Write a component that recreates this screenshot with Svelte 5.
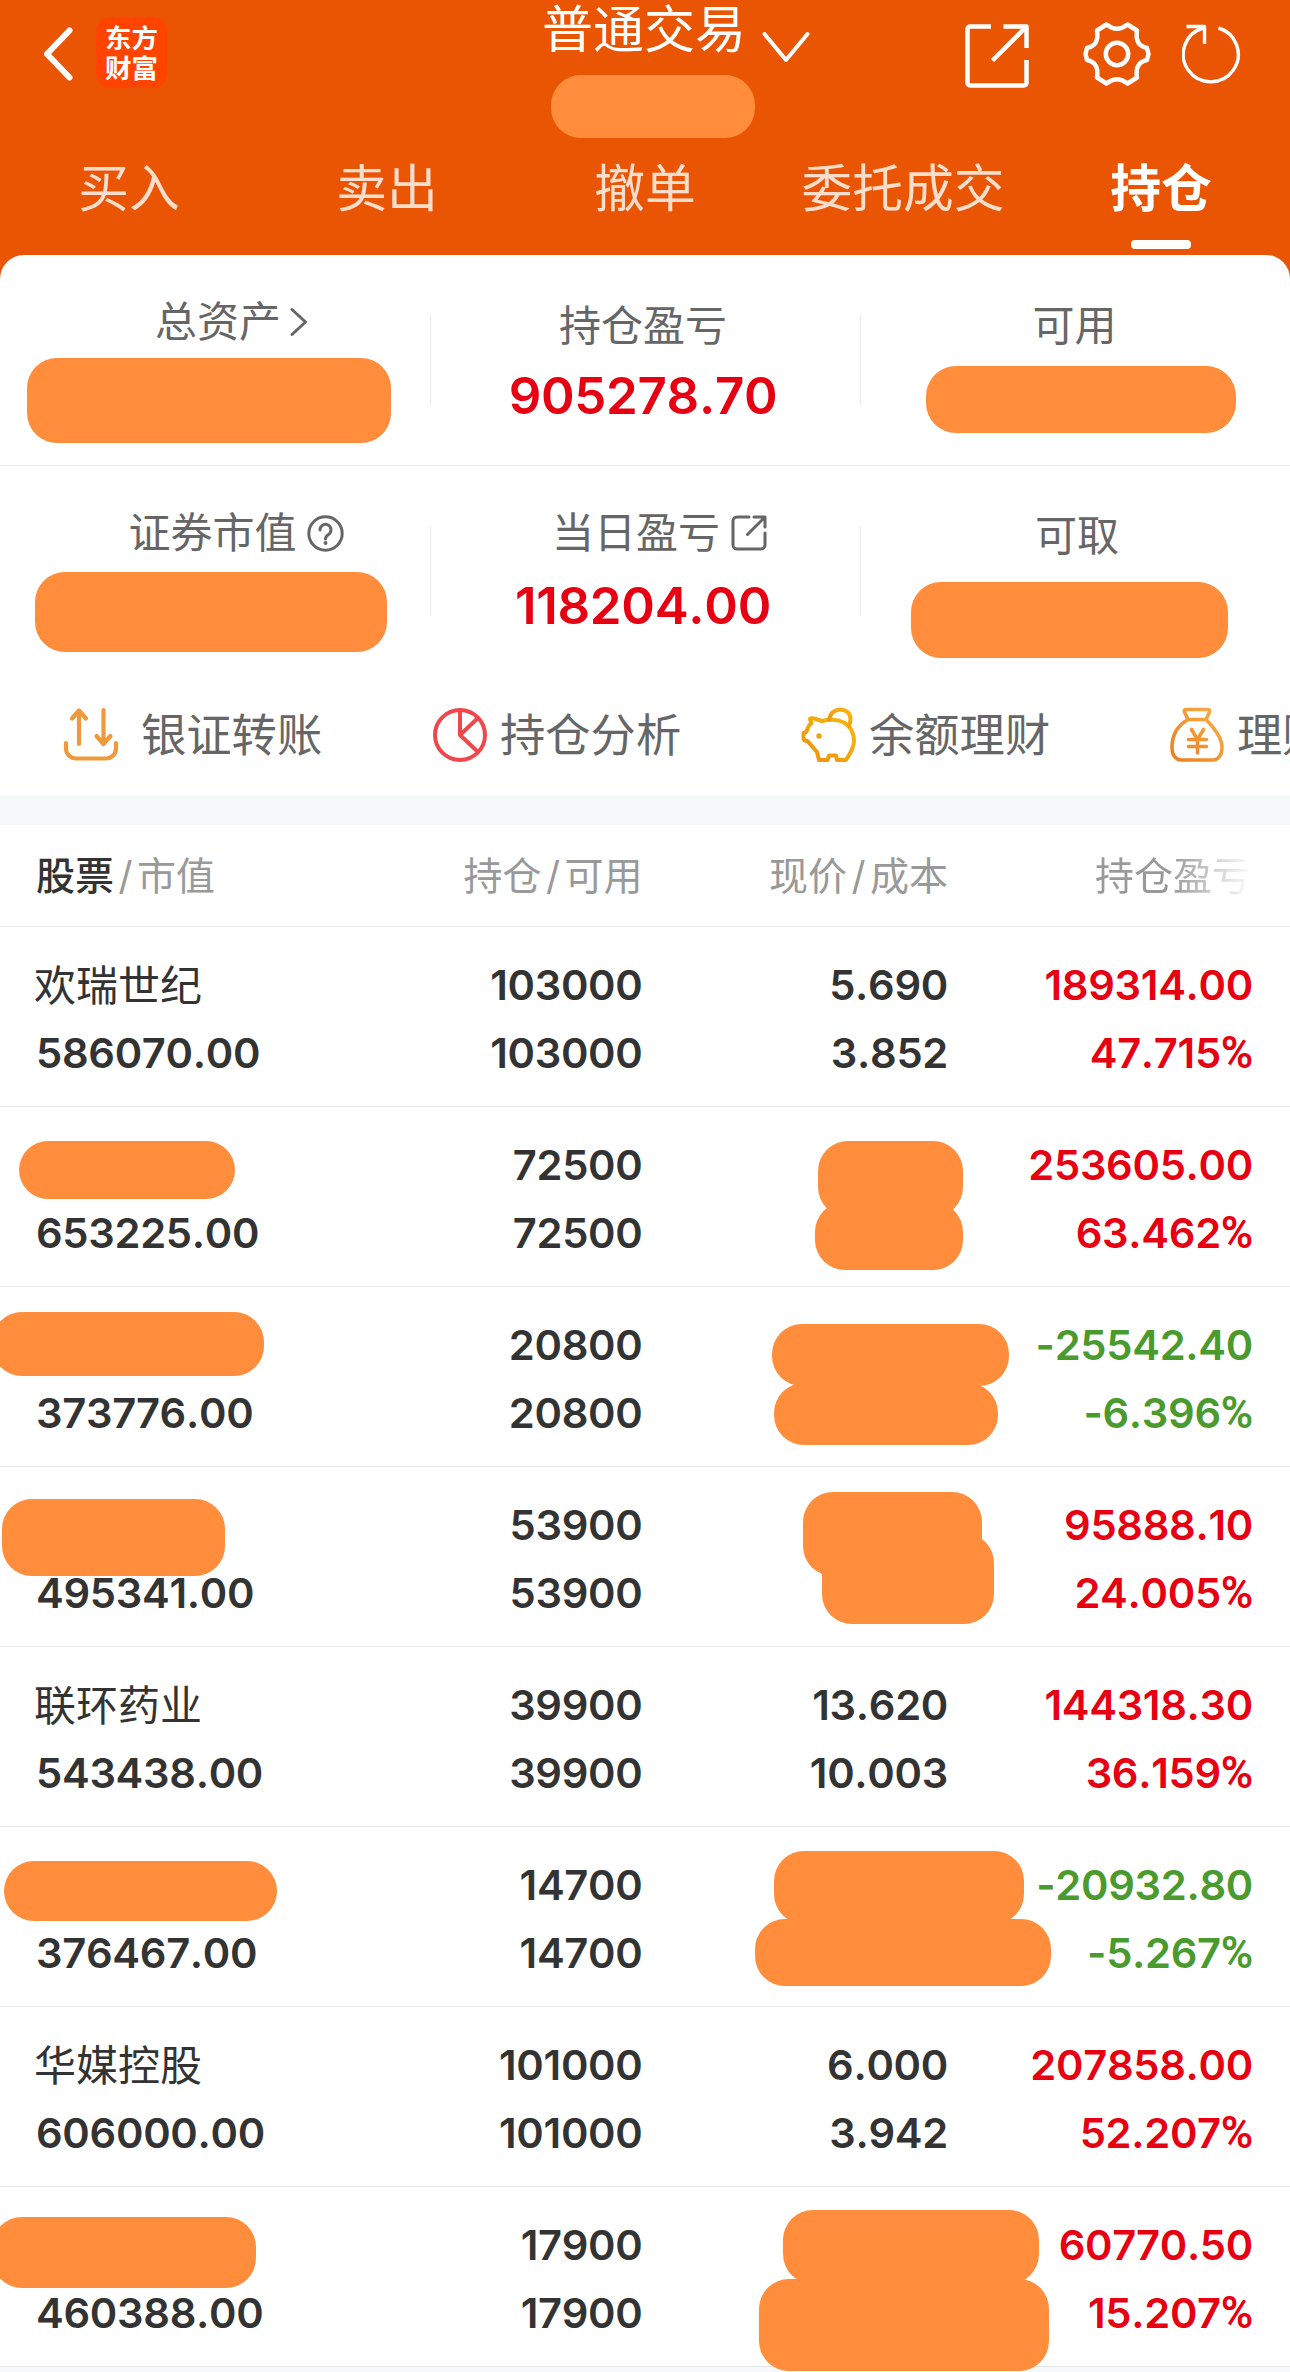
<script>
  const tabs = ['买入', '卖出', '撤单', '委托成交', '持仓'];
  const active = '持仓';

  // Masks are [left, top, width, height], relative to their own section or row.
  const summary = [
    {
      cells: [
        { label: '总资产', icon: 'chevron' },
        { label: '持仓盈亏', value: '905278.70' },
        { label: '可用' }
      ],
      masks: [[27, 103, 364, 85], [926, 111, 310, 67]]
    },
    {
      cells: [
        { label: '证券市值', icon: 'help' },
        { label: '当日盈亏', icon: 'share', value: '118204.00' },
        { label: '可取' }
      ],
      masks: [[35, 106, 352, 80], [911, 116, 317, 76]]
    }
  ];

  const shortcuts = [
    { label: '银证转账', icon: 'transfer' },
    { label: '持仓分析', icon: 'pie' },
    { label: '余额理财', icon: 'pig' },
    { label: '理财', icon: 'bag' }
  ];

  const holdings = [
    { name: '欢瑞世纪', value: '586070.00', qty: '103000', price: '5.690', cost: '3.852', gain: '189314.00', pct: '47.715' },
    { value: '653225.00', qty: '72500', gain: '253605.00', pct: '63.462',
      masks: [[19, 34, 216, 58], [818, 34, 145, 76], [815, 95, 148, 68]] },
    { value: '373776.00', qty: '20800', gain: '-25542.40', pct: '-6.396',
      masks: [[-8, 25, 272, 64], [772, 37, 237, 62], [774, 96, 224, 62]] },
    { value: '495341.00', qty: '53900', gain: '95888.10', pct: '24.005',
      masks: [[2, 32, 223, 77], [803, 25, 179, 84], [822, 66, 172, 91]] },
    { name: '联环药业', value: '543438.00', qty: '39900', price: '13.620', cost: '10.003', gain: '144318.30', pct: '36.159' },
    { value: '376467.00', qty: '14700', gain: '-20932.80', pct: '-5.267',
      masks: [[4, 34, 273, 60], [774, 24, 250, 73], [755, 92, 296, 67]] },
    { name: '华媒控股', value: '606000.00', qty: '101000', price: '6.000', cost: '3.942', gain: '207858.00', pct: '52.207' },
    { value: '460388.00', qty: '17900', gain: '60770.50', pct: '15.207',
      masks: [[-8, 30, 264, 71], [783, 23, 256, 74], [759, 92, 290, 92]] }
  ];
</script>

{#snippet masks(list)}
  {#each list ?? [] as [x, y, w, h]}
    <span class="mask" style="left:{x}px;top:{y}px;width:{w}px;height:{h}px"></span>
  {/each}
{/snippet}

<div class="app">
  <header>
    <div class="topbar">
      <svg class="back" width="30" height="54" viewBox="0 0 30 54"><path d="M26.500 3.500 4 27l22.500 23.500" /></svg>
      <div class="logo"><span>东方</span><span>财富</span></div>
      <div class="title">普通交易</div>
      <svg class="down" width="48" height="34" viewBox="0 0 48 34"><path d="M2.500 3 24 29 45.500 3" /></svg>
      <div class="actions">
        <svg width="64" height="64" viewBox="0 0 64 64" stroke-width="4.500">
          <path d="M26 2.500H5a2.500 2.500 0 0 0-2.500 2.500v54a2.500 2.500 0 0 0 2.500 2.500h54a2.500 2.500 0 0 0 2.500-2.500V36M38.500 2.500h23V24M61 3 27.500 36.500" />
        </svg>
        <svg class="gear" width="68" height="68" viewBox="0 0 68 68" stroke-width="4.500">
          <path d="M23.500 4.500Q34 13 44.500 4.500L54 10.500C52.500 20 55 26 64 28L65.500 34 64 40C55 42 52.500 48 54 57.500L44.500 63.500Q34 55 23.500 63.500L14 57.500C15.500 48 13 42 4 40L2.500 34 4 28C13 26 15.500 20 14 10.500Z" />
          <circle cx="34" cy="34" r="11.200" />
        </svg>
        <svg class="reload" width="60" height="62" viewBox="0 0 60 62" stroke-width="3.400">
          <path d="M36.500 4A27.500 27.500 0 1 1 21 4M4.500 2.500h18V20M22 3 17 6" />
        </svg>
      </div>
      <span class="mask account"></span>
    </div>
    <nav>
      {#each tabs as tab}
        <div class="tab" class:active={tab === active}>{tab}</div>
      {/each}
    </nav>
  </header>

  <main>
    {#each summary as row}
      <section class="summary">
        {#each row.cells as cell}
          <div class="cell">
            <div class="label">
              <span>{cell.label}</span>
              {#if cell.icon === 'chevron'}
                <svg class="chev" width="18" height="30" viewBox="0 0 18 30"><path d="M2 2.500 15.500 15 2 27.500" /></svg>
              {:else if cell.icon === 'help'}
                <svg class="help" width="37" height="37" viewBox="0 0 37 37">
                  <circle cx="18.500" cy="18.500" r="16.700" />
                  <path d="M13 15a5.500 5.500 0 1 1 8.500 4.500q-3 2-3 4.500" />
                  <circle class="dot" cx="18.500" cy="28" r="2" />
                </svg>
              {:else if cell.icon === 'share'}
                <svg class="share" width="36" height="36" viewBox="0 0 36 36">
                  <path d="M18 2H6a4 4 0 0 0-4 4v24a4 4 0 0 0 4 4h24a4 4 0 0 0 4-4V18M23 2h11v10M34 2 16.500 19.500" />
                </svg>
              {/if}
            </div>
            {#if cell.value}<div class="figure">{cell.value}</div>{/if}
          </div>
        {/each}
        {@render masks(row.masks)}
      </section>
    {/each}

    <section class="shortcuts">
      {#each shortcuts as item}
        <div class="shortcut {item.icon}">
          {#if item.icon === 'transfer'}
            <svg width="56" height="56" viewBox="0 0 56 56" stroke="#f0993a" stroke-width="4.200">
              <path d="M16 37V4M9 11.500l7-8 7 8M40.500 3v33M33.500 29l7 8 7-8M3 36v5.500a10 10 0 0 0 10 10h30a10 10 0 0 0 10-10V36" />
            </svg>
          {:else if item.icon === 'pie'}
            <svg width="56" height="56" viewBox="0 0 56 56" stroke="#f0474c" stroke-width="4">
              <circle cx="28" cy="28" r="25" /><path d="M28 3v25L46 11M28 28l18 17" />
            </svg>
          {:else if item.icon === 'pig'}
            <svg width="56" height="56" viewBox="0 0 56 56" stroke="url(#gold)" stroke-width="4">
              <defs><linearGradient id="gold" x1="0" y1="1" x2="1" y2="0"><stop offset="0" stop-color="#ef8f10" /><stop offset="1" stop-color="#f8b90c" /></linearGradient></defs>
              <path d="M9 12q1-1 4-.5l8 2.500q13-3 22 1.500 10 6 10 18.500 0 7-8 19h-9l-1-4.500h-7l-1.500 4.500h-8.500l-2-8-9.500-11q-4 0-4-3v-5q3 0 4-4 1-4 4-6z" />
              <path d="M28 12.500Q30 3 39 2.500 49 3 49.500 12q0 3-1.500 7" />
              <circle cx="18" cy="29" r="2.700" fill="#f0a010" stroke="none" />
            </svg>
          {:else}
            <svg width="56" height="56" viewBox="0 0 56 56" stroke="url(#amber)" stroke-width="3.600">
              <defs><linearGradient id="amber" x1="0" y1="1" x2="1" y2="0"><stop offset="0" stop-color="#ee7d1c" /><stop offset="1" stop-color="#f6b04c" /></linearGradient></defs>
              <path d="M19 12.500 15.500 5q-1-2.500 2-2.500h21q3 0 2 2.500l-3.500 7.500zM19 12.500C8 19 3 29 3 40q0 8 4 11 2 2 5 2h32q3 0 5-2 4-3 4-11 0-11-16-27.500M22.500 22.500l6 10 6-10M19.500 32.500h18M19.500 39.500h18M28.500 32.500V46" />
            </svg>
          {/if}
          <span>{item.label}</span>
        </div>
      {/each}
    </section>

    <section class="table">
      <div class="row head">
        <span class="first"><b>股票</b><i>/</i>市值</span>
        <span>持仓<i>/</i>可用</span>
        <span>现价<i>/</i>成本</span>
        <span class="fade">持仓盈亏</span>
      </div>
      {#each holdings as h}
        <div class="row">
          <div class="first"><span class="name">{h.name ?? ''}</span><span>{h.value}</span></div>
          <div><span>{h.qty}</span><span>{h.qty}</span></div>
          <div><span>{h.price ?? ''}</span><span>{h.cost ?? ''}</span></div>
          <div class={h.gain.startsWith('-') ? 'fall' : 'rise'}><span>{h.gain}</span><span>{h.pct}<em>%</em></span></div>
          {@render masks(h.masks)}
        </div>
      {/each}
    </section>
  </main>
</div>

<style>
  :global(body) { background: #f6f8fa; }
  .app {
    width: 1290px;
    height: 2372px;
    overflow: hidden;
    background: #f6f8fa;
    font-family: Inter, "Noto Sans CJK SC", sans-serif;
    font-kerning: none;
    color: #333;
  }
  header { height: 285px; background: #ea5504; }
  svg { display: block; flex: none; fill: none; stroke-linecap: round; stroke-linejoin: round; }
  .mask {
    position: absolute;
    border-radius: 30px;
    background: #ff8d3b;
  }

  .topbar {
    position: relative;
    display: flex;
    align-items: flex-start;
    box-sizing: border-box;
    height: 148px;
    padding: 0 48px 0 43px;
    color: #fff;
    stroke: #fff;
  }
  .topbar span { stroke: none; }
  .back { margin-top: 27px; stroke-width: 6; }
  .logo {
    display: flex;
    flex-direction: column;
    align-items: center;
    box-sizing: border-box;
    width: 71px;
    height: 71px;
    margin: 17px 0 0 23px;
    padding-top: 6px;
    border-radius: 14px;
    background: #ff4400;
    font-size: 26.500px;
    font-weight: 700;
    line-height: 30px;
  }
  .title {
    margin: 0 0 0 375px;
    font-size: 51px;
    line-height: 60px;
    stroke: none;
  }
  .down { margin: 31px 0 0 16px; stroke-width: 4; }
  .actions { display: flex; margin: 24px 0 0 auto; }
  .actions svg { stroke-linecap: butt; }
  .actions .gear { margin: -4px 0 0 54px; }
  .reload { margin: 0 0 0 31px; }
  .account { left: 551px; top: 75px; width: 204px; height: 63px; }

  nav { display: grid; grid-template-columns: repeat(5, 258px); height: 107px; }
  .tab {
    display: flex;
    flex-direction: column;
    align-items: center;
    font-size: 50.800px;
    line-height: 82px;
    color: rgba(255, 255, 255, .8);
  }
  .tab.active { color: #fff; font-weight: 600; }
  .tab.active::after {
    content: "";
    width: 60px;
    height: 9px;
    margin-top: 10px;
    border-radius: 4px;
    background: #fff;
  }

  main { margin-top: -30px; background: #fff; border-radius: 24px 24px 0 0; }
  .summary {
    position: relative;
    display: grid;
    grid-template-columns: repeat(3, 1fr);
    box-sizing: border-box;
    height: 211px;
    border-bottom: 1px solid #e6e6e6;
  }
  .summary + .summary { height: 209px; border-bottom: 0; }
  .cell {
    display: flex;
    flex-direction: column;
    align-items: center;
    height: 90px;
    margin-top: 60px;
    padding-right: 5px;
    border-left: 1px solid #ebebeb;
    box-sizing: border-box;
  }
  .cell:first-child { border-left-color: transparent; }
  .label {
    display: flex;
    align-items: center;
    height: 50px;
    margin-top: -14px;
    font-size: 42px;
    line-height: 50px;
    color: #666;
    stroke: #666;
    stroke-width: 3;
  }
  .label span { stroke: none; }
  .cell:first-child .label { margin-top: -18px; padding-left: 37px; }
  .chev { margin-left: 9px; }
  .help { margin-left: 10px; }
  .share { margin-left: 11px; }
  .summary + .summary .cell .label { margin-top: -18px; }
  .summary + .summary .cell:first-child .label { padding-left: 46px; }
  .summary + .summary .cell:nth-child(2) .label { padding-left: 33px; }
  .cell:nth-child(3) .label { padding-left: 3px; }
  .summary + .summary .cell:nth-child(3) .label { margin-top: -15px; padding-left: 8px; }
  .dot { fill: #666; stroke: none; }
  .figure {
    margin-top: 15px;
    font-size: 51px;
    font-weight: 600;
    letter-spacing: -.3px;
    line-height: 60px;
    color: #e60012;
  }
  .summary + .summary .figure { margin-top: 18px; }

  .shortcuts {
    display: grid;
    grid-template-columns: repeat(4, 369px);
    width: 1290px;
    height: 120px;
    overflow: hidden;
    border-bottom: 30px solid #f6f8fa;
  }
  .shortcut {
    display: flex;
    align-items: center;
    gap: 12px;
    height: 120px;
    padding-left: 63px;
    font-size: 45.300px;
    line-height: 60px;
    color: #666;
    white-space: nowrap;
  }
  .shortcut span { padding-top: 2px; }
  .transfer { gap: 22px; }
  .bag { padding-left: 62px; }

  .row {
    position: relative;
    display: grid;
    grid-template-columns: 337px 305.500px 305.500px 305px;
    box-sizing: border-box;
    height: 180px;
    padding: 24px 37px 0 0;
    border-bottom: 1px solid #e6e6e6;
    font-size: 41.700px;
    font-weight: 560;
    letter-spacing: -.3px;
    line-height: 68px;
    text-align: right;
  }
  .row > div { display: flex; flex-direction: column; }
  .row > div > span { height: 68px; }
  .row .first { padding-left: 36px; text-align: left; }
  .row .name { margin-left: -2px; padding-top: 1px; height: 67px; font-size: 42px; font-weight: 400; letter-spacing: 0; }
  .row em { font-family: Roboto, sans-serif; font-size: 44px; font-style: normal; line-height: 1; }
  .rise { color: #e60012; }
  .fall { color: #4a9a2e; }
  .head {
    height: 102px;
    padding-top: 17px;
    font-size: 39px;
    font-weight: 400;
    letter-spacing: 0;
    color: #999;
  }
  .head b { color: #333; font-weight: 500; }
  .head i { margin: 0 4.500px; font-style: normal; }
  .head .fade {
    padding-right: 2px;
    background: linear-gradient(90deg, #999 73%, #fff 100%);
    background-clip: text;
    color: transparent;
  }
</style>
